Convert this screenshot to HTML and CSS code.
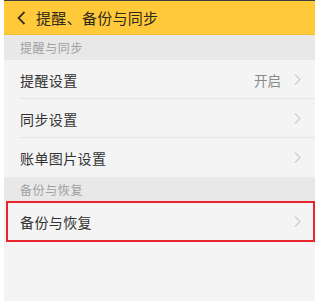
FILE: index.html
```html
<!DOCTYPE html>
<html lang="zh">
<head>
<meta charset="utf-8">
<link rel="stylesheet" href="styles.css">
</head>
<body>
<div class="page">
  <header class="topbar">
    <svg class="back" width="9" height="14" viewBox="0 0 9 14"><polyline points="7.5,1 1.5,7 7.5,13" fill="none" stroke="#3a3320" stroke-width="1.8"/></svg>
    <span class="title">提醒、备份与同步</span>
  </header>
  <div class="section">提醒与同步</div>
  <div class="row divided">
    <span class="label">提醒设置</span>
    <span class="value">开启</span>
    <svg class="chev" width="7" height="11" viewBox="0 0 7 11"><polyline points="1,0.5 6,5.5 1,10.5" fill="none" stroke="#cfcfcf" stroke-width="1.2"/></svg>
  </div>
  <div class="row divided">
    <span class="label">同步设置</span>
    <svg class="chev" width="7" height="11" viewBox="0 0 7 11"><polyline points="1,0.5 6,5.5 1,10.5" fill="none" stroke="#cfcfcf" stroke-width="1.2"/></svg>
  </div>
  <div class="row">
    <span class="label">账单图片设置</span>
    <svg class="chev" width="7" height="11" viewBox="0 0 7 11"><polyline points="1,0.5 6,5.5 1,10.5" fill="none" stroke="#cfcfcf" stroke-width="1.2"/></svg>
  </div>
  <div class="section s2">备份与恢复</div>
  <div class="row tall">
    <span class="label">备份与恢复</span>
    <svg class="chev" width="7" height="11" viewBox="0 0 7 11"><polyline points="1,0.5 6,5.5 1,10.5" fill="none" stroke="#cfcfcf" stroke-width="1.2"/></svg>
    <span class="highlight"></span>
  </div>
  <div class="rest"></div>
</div>
</body>
</html>
```
FILE: styles.css
```css
html, body {
  margin: 0;
  padding: 0;
  background: #ffffff;
}
body {
  font-family: "Noto Sans CJK SC", "Noto Sans", sans-serif;
}
.page {
  margin-left: 4px;
  width: 311px;
  height: 301px;
  background: #f4f4f4;
  display: flex;
  flex-direction: column;
}
.topbar {
  height: 34px;
  border-top: 1px solid #3d3d3d;
  background: #ffc93a;
  border-bottom: 1px solid #f3bd2e;
  box-sizing: border-box;
  height: 35px;
  display: flex;
  align-items: center;
  padding-left: 13px;
  gap: 10px;
}
.back {
  display: block;
  flex: none;
}
.title {
  font-size: 15px;
  color: #2f2a1c;
  letter-spacing: 0.3px;
  line-height: 1;
}
.section {
  height: 25px;
  background: #e8e8e8;
  display: flex;
  align-items: center;
  padding-left: 16px;
  font-size: 12px;
  color: #a0a0a0;
  letter-spacing: 0.6px;
  flex: none;
}
.section.s2 {
  height: 24px;
}
.row {
  position: relative;
  height: 39px;
  box-sizing: border-box;
  display: flex;
  align-items: center;
  padding-left: 16px;
  padding-right: 14px;
  flex: none;
}
.row.divided::after {
  content: "";
  position: absolute;
  left: 16px;
  right: 0;
  bottom: 0;
  height: 1px;
  background: #e6e6e6;
}
.row.tall {
  height: 41px;
}
.label {
  font-size: 14px;
  color: #333333;
  letter-spacing: 0.4px;
  flex: 1;
}
.value {
  font-size: 13.5px;
  color: #8a8a8a;
  margin-right: 13px;
}
.chev {
  display: block;
  flex: none;
}
.highlight {
  position: absolute;
  left: 2px;
  right: 0;
  top: 0;
  bottom: 0;
  border: 2px solid #e8242f;
}
.rest {
  flex: 1;
}
```
